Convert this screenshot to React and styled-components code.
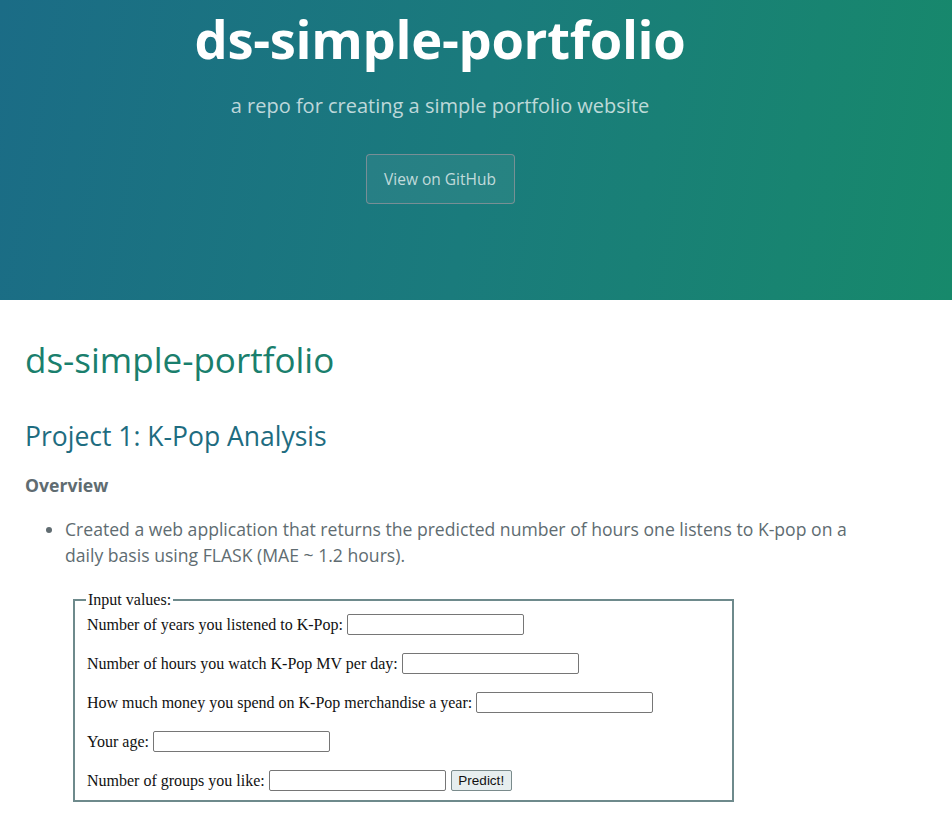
import React from "react";
import styled, { createGlobalStyle } from "styled-components";

const Global = createGlobalStyle`
  html, body { margin: 0; padding: 0; background: #fff; }
  body { font-family: "Open Sans", "Noto Sans", sans-serif; color: #606c71; }
`;

const Header = styled.header`
  background: linear-gradient(100deg, #1b6c86 0%, #1a7b7c 50%, #17896b 100%);
  height: 300px;
  box-sizing: border-box;
  padding: 0 72px 0 0;
  display: flex;
  flex-direction: column;
  align-items: center;
  color: #fff;
`;

const ProjectName = styled.h1`
  margin: 4px 0 0;
  font-size: 52.5px;
  line-height: 70px;
  font-weight: 700;
  letter-spacing: -0.3px;
`;

const Tagline = styled.h2`
  margin: 18px 0 0;
  font-size: 20px;
  line-height: 28px;
  font-weight: 400;
  color: rgba(255, 255, 255, 0.72);
`;

const Btn = styled.a`
  margin-top: 34px;
  display: inline-block;
  box-sizing: border-box;
  width: 149px;
  height: 50px;
  line-height: 48px;
  text-align: center;
  font-size: 15.5px;
  color: rgba(255, 255, 255, 0.72);
  background: rgba(255, 255, 255, 0.06);
  border: 1px solid rgba(220, 160, 170, 0.45);
  border-radius: 4px;
  text-decoration: none;
`;

const Main = styled.main`
  padding: 0 25px;
`;

const Title = styled.h1`
  margin: 38px 0 0;
  font-size: 35px;
  line-height: 44px;
  font-weight: 400;
  color: #1a7f6d;
`;

const Sub = styled.h2`
  margin: 37px 0 0;
  font-size: 26.5px;
  line-height: 34px;
  font-weight: 400;
  color: #1e6c80;
`;

const H3 = styled.h3`
  margin: 19px 0 0;
  font-size: 17.6px;
  line-height: 26px;
  font-weight: 700;
  color: #606c71;
`;

const List = styled.ul`
  margin: 18px 0 0;
  padding-left: 40px;
`;

const Item = styled.li`
  font-size: 17.6px;
  line-height: 26px;
  color: #606c71;
  max-width: 800px;
  &::marker { color: #606c71; }
`;

const Fieldset = styled.fieldset`
  margin: 24px 0 0 48px;
  width: 661px;
  box-sizing: border-box;
  border: 2px solid #6e8a8c;
  padding: 0 12px 9px 12px;
  font-family: "Liberation Serif", "Times New Roman", serif;
  font-size: 16px;
  color: #111;
`;

const Legend = styled.legend`
  padding: 0 2px;
  margin-left: -1px;
  font-size: 16px;
  line-height: 16px;
`;

const Row = styled.div`
  display: flex;
  align-items: center;
  gap: 4px;
  height: 21px;
  margin-top: ${(p) => (p.$first ? "6px" : "18px")};
`;

const Input = styled.input`
  box-sizing: border-box;
  width: 177px;
  height: 21px;
  border: 1px solid #767676;
  border-radius: 2px;
  padding: 1px 2px;
  background: #fff;
`;

const Predict = styled.button`
  box-sizing: border-box;
  height: 21px;
  width: 61px;
  padding: 0;
  margin-left: 1px;
  font-family: "Liberation Sans", Arial, sans-serif;
  font-size: 13.5px;
  color: #111;
  background: #e6eeef;
  border: 1px solid #7a8b8c;
  border-radius: 2px;
`;

const fields = [
  "Number of years you listened to K-Pop:",
  "Number of hours you watch K-Pop MV per day:",
  "How much money you spend on K-Pop merchandise a year:",
  "Your age:",
  "Number of groups you like:",
];

export default function App() {
  return (
    <>
      <Global />
      <Header>
        <ProjectName>ds-simple-portfolio</ProjectName>
        <Tagline>a repo for creating a simple portfolio website</Tagline>
        <Btn href="#">View on GitHub</Btn>
      </Header>
      <Main>
        <Title>ds-simple-portfolio</Title>
        <Sub>Project 1: K-Pop Analysis</Sub>
        <H3>Overview</H3>
        <List>
          <Item>
            Created a web application that returns the predicted number of hours one listens to K-pop on a daily basis using FLASK (MAE ~ 1.2 hours).
          </Item>
        </List>
        <Fieldset>
          <Legend>Input values:</Legend>
          {fields.map((f, i) => (
            <Row key={f} $first={i === 0}>
              <span>{f}</span>
              <Input type="text" />
              {i === fields.length - 1 && <Predict>Predict!</Predict>}
            </Row>
          ))}
        </Fieldset>
      </Main>
    </>
  );
}
